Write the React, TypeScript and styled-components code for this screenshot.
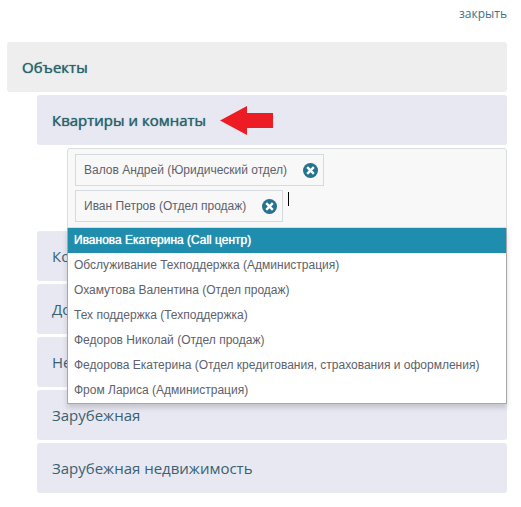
import React, { useState } from "react";
import styled, { createGlobalStyle } from "styled-components";

const GlobalStyle = createGlobalStyle`
  *, *::before, *::after { box-sizing: border-box; }
  body {
    margin: 0;
    background: #fff;
    font-family: "Open Sans", "Noto Sans", sans-serif;
  }
`;

const Page = styled.main`
  padding: 6px 14px 14px 7px;
`;

const TopBar = styled.header`
  display: flex;
  justify-content: flex-end;
  height: 36px;
`;

const CloseLink = styled.a`
  font-size: 12px;
  line-height: 16px;
  height: 16px;
  color: #436f86;
  text-decoration: none;
`;

const Stack = styled.div`
  display: flex;
  flex-direction: column;
  gap: 3px;
`;

const Children = styled(Stack)`
  margin-left: 30px;
`;

const Row = styled.button<{ $root?: boolean; $active?: boolean }>`
  display: flex;
  align-items: center;
  gap: 14px;
  width: 100%;
  height: 50px;
  padding: 0 15px;
  border: 0;
  border-radius: 3px;
  background: ${(p) => (p.$root ? "#eeeeee" : "#e8e8f2")};
  color: ${(p) => (p.$active ? "#2b636b" : "#386271")};
  font-family: inherit;
  font-size: 15px;
  font-weight: 400;
  text-shadow: ${(p) => (p.$active ? "0 0 1px currentColor" : "none")};
  line-height: 20px;
  text-align: left;
  cursor: pointer;
`;

const Picker = styled.div`
  position: relative;
  margin-left: 30px;
  font-family: "Liberation Sans", Arial, sans-serif;
  font-size: 12px;
  color: #5d626d;
`;

const Field = styled.div`
  display: flex;
  flex-wrap: wrap;
  gap: 4px;
  padding: 5px 7px;
  border: 1px solid #d9dde0;
  border-radius: 3px 3px 0 0;
  background: #f8f8f8;
`;

const Tag = styled.span`
  display: flex;
  align-items: center;
  gap: 16px;
  height: 32px;
  padding: 0 5px 0 8px;
  border: 1px solid #d5dade;
  white-space: nowrap;
`;

const RemoveButton = styled.button`
  display: flex;
  padding: 0;
  border: 0;
  background: none;
  cursor: pointer;
`;

const Entry = styled.label`
  display: flex;
  flex: 1;
  min-width: 150px;
  height: 32px;
  padding: 2px 1px;
`;

const Caret = styled.span`
  width: 1px;
  height: 14px;
  background: #000;
`;

const SearchInput = styled.input`
  flex: 1;
  min-width: 0;
  height: 14px;
  padding: 0;
  border: 0;
  outline: 0;
  background: transparent;
  font: inherit;
  color: inherit;
`;

const Options = styled.ul`
  position: absolute;
  top: 100%;
  left: 0;
  right: 0;
  z-index: 1;
  margin: 0;
  padding: 0;
  list-style: none;
  border: 1px solid #a6a8ab;
  border-top: 0;
  background: #fff;
  box-shadow: 0 4px 5px rgba(0, 0, 0, 0.15);
`;

const Option = styled.li<{ $selected: boolean }>`
  height: 25px;
  padding: 0 6px;
  line-height: 25px;
  white-space: nowrap;
  cursor: pointer;
  background: ${(p) => (p.$selected ? "#1f8dad" : "transparent")};
  color: ${(p) => (p.$selected ? "#fff" : "inherit")};
  text-shadow: ${(p) => (p.$selected ? "0 0 1px currentColor" : "none")};
`;

const RemoveIcon = () => (
  <svg width="15" height="15" viewBox="0 0 15 15" aria-hidden="true">
    <circle cx="7.5" cy="7.5" r="7.5" fill="#257291" />
    <path d="M4.2 4.2 10.8 10.8M10.8 4.2 4.2 10.8" stroke="#fff" strokeWidth="2.4" />
  </svg>
);

const Arrow = () => (
  <svg width="53" height="29" viewBox="0 0 53 29" aria-hidden="true">
    <path d="M0 14.5 27 0V7H53V22H27V29Z" fill="#ed1c24" />
  </svg>
);

const people = [
  "Иванова Екатерина (Call центр)",
  "Обслуживание Техподдержка (Администрация)",
  "Охамутова Валентина (Отдел продаж)",
  "Тех поддержка (Техподдержка)",
  "Федоров Николай (Отдел продаж)",
  "Федорова Екатерина (Отдел кредитования, страхования и оформления)",
  "Фром Лариса (Администрация)",
];

const sections = ["Ко", "До", "Не", "Зарубежная", "Зарубежная недвижимость"];

export default function App() {
  const [tags, setTags] = useState(["Валов Андрей (Юридический отдел)", "Иван Петров (Отдел продаж)"]);
  const [selected, setSelected] = useState(0);

  return (
    <>
      <GlobalStyle />
      <Page>
        <TopBar>
          <CloseLink href="#">закрыть</CloseLink>
        </TopBar>
        <Stack>
          <Row type="button" $root $active aria-expanded="true">
            Объекты
          </Row>
          <Children>
            <Row type="button" $active aria-expanded="true">
              Квартиры и комнаты
              <Arrow />
            </Row>
            <Picker>
              <Field>
                {tags.map((tag) => (
                  <Tag key={tag}>
                    {tag}
                    <RemoveButton
                      type="button"
                      aria-label={`Удалить: ${tag}`}
                      onClick={() => setTags(tags.filter((t) => t !== tag))}
                    >
                      <RemoveIcon />
                    </RemoveButton>
                  </Tag>
                ))}
                <Entry>
                  <Caret />
                  <SearchInput type="text" aria-label="Сотрудник" />
                </Entry>
              </Field>
              <Options role="listbox" aria-label="Сотрудники">
                {people.map((person, i) => (
                  <Option
                    key={person}
                    role="option"
                    aria-selected={i === selected}
                    $selected={i === selected}
                    onMouseEnter={() => setSelected(i)}
                  >
                    {person}
                  </Option>
                ))}
              </Options>
            </Picker>
            {sections.map((name) => (
              <Row type="button" key={name} aria-expanded="false">
                {name}
              </Row>
            ))}
          </Children>
        </Stack>
      </Page>
    </>
  );
}
